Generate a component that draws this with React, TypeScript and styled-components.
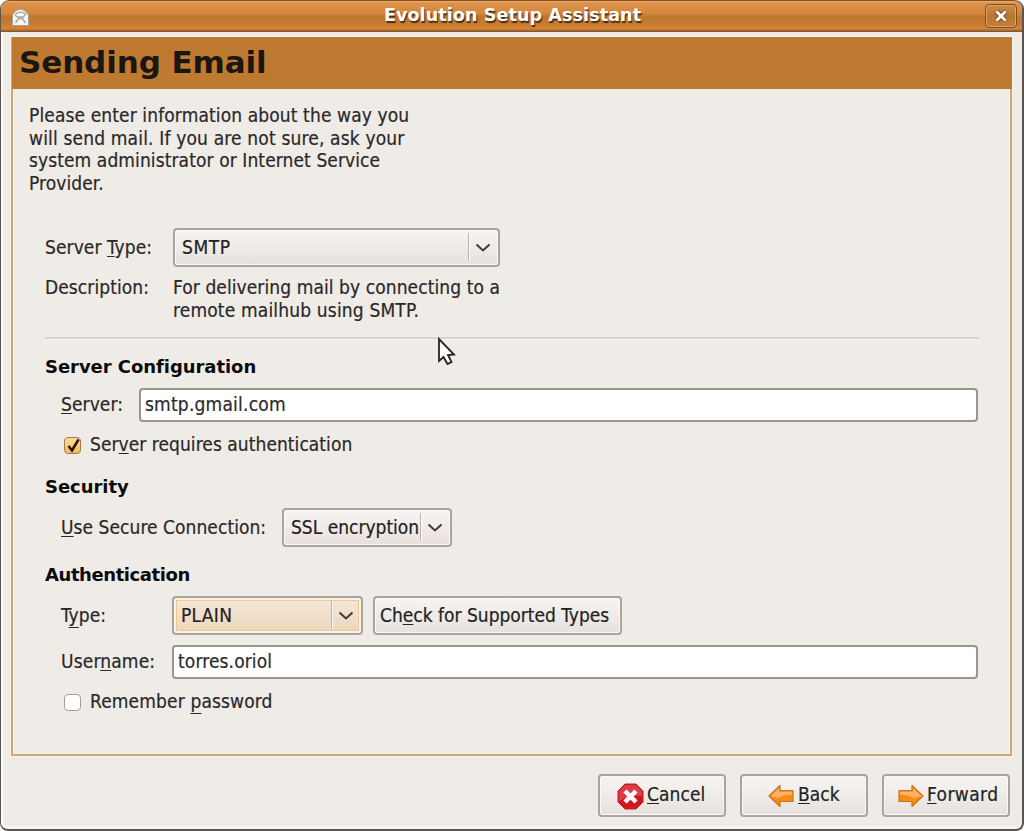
import React from "react";
import styled, { createGlobalStyle } from "styled-components";

const GlobalStyle = createGlobalStyle`
  * { box-sizing: border-box; }
  body {
    margin: 0;
    background: #fff;
    font-family: "DejaVu Sans Condensed", "DejaVu Sans", sans-serif;
    font-stretch: condensed;
    font-size: 19px;
    line-height: 22.6px;
    color: #2a2827;
  }
`;

const Window = styled.main`
  width: 1024px;
  height: 831px;
  display: flex;
  flex-direction: column;
  overflow: hidden;
  background: #efebe7;
  border: 1px solid #5a5550;
  border-width: 0 2px 2px 1px;
  border-radius: 9px 9px 8px 8px;
  box-shadow: inset 2px 0 0 #fbf9f6, inset 0 -3px 0 #f8f5f1;
`;

const TitleBar = styled.header`
  flex: none;
  height: 32px;
  display: grid;
  grid-template-columns: 38px 1fr 38px;
  align-items: center;
  border-top: 1px solid #8a4f18;
  border-bottom: 1px solid #7f5a35;
  border-radius: 8px 8px 0 0;
  background: linear-gradient(#eab27a 0, #dc914a 2px, #d5883f 12px, #bd772e 16px, #c57b30 22px, #d68433 28px, #a9692c 29px, #a9692c 30px);
`;

const WindowIcon = styled.svg`
  margin: 2px 0 0 10px;
`;

const Title = styled.h1`
  margin: 0;
  padding: 0 0 2px 2px;
  font-family: "DejaVu Sans", sans-serif;
  font-size: 17.5px;
  letter-spacing: 0.11px;
  font-weight: bold;
  font-stretch: normal;
  text-align: center;
  color: #fff;
  text-shadow: 1px 2px 1px #4a2c0e;
  white-space: nowrap;
`;

const CloseButton = styled.button`
  width: 32px;
  height: 24px;
  margin: 0 0 1px 1px;
  padding: 0;
  display: grid;
  place-items: center;
  border: 1.5px solid #7d4e20;
  border-radius: 4px;
  background: linear-gradient(#d08a49, #b97630 50%, #c98039);
  box-shadow: inset 0 0 0 1px #dda36a;
`;

const Panel = styled.section`
  margin: 5px 10px 0 10px;
  height: 719px;
  flex: none;
  display: flex;
  flex-direction: column;
  border: 2px solid #cfa679;
  box-shadow: 0 0 0 1px #f8f3ec, inset 0 0 0 1px #f8f3ec;
`;

const PanelHeader = styled.h2`
  margin: -2px -2px 0 -1px;
  height: 52px;
  flex: none;
  padding: 1px 0 0 7px;
  background: #be7a31;
  color: #1b1610;
  font-family: "DejaVu Sans", sans-serif;
  font-stretch: normal;
  font-weight: bold;
  font-size: 31px;
  letter-spacing: -0.1px;
  line-height: 49px;
  white-space: nowrap;
`;

const Content = styled.div`
  display: flex;
  flex-direction: column;
  padding: 15px 32px 0;
`;

const Intro = styled.p`
  margin: 0 0 0 -16px;
  height: 92px;
`;

const Line = styled.span<{ $track?: number }>`
  display: block;
  width: max-content;
  white-space: pre;
  letter-spacing: ${(p) => p.$track ?? 0.08}px;
  -webkit-text-stroke: 0.2px currentColor;
`;

const Key = styled.span<{ $low?: boolean }>`
  text-decoration: underline;
  text-decoration-thickness: 1px;
  text-decoration-skip-ink: none;
  text-underline-offset: ${(p) => (p.$low ? 5 : 2)}px;
`;

const Row = styled.div<{ $top: number; $height: number; $indent?: number }>`
  display: flex;
  align-items: center;
  flex: none;
  margin-top: ${(p) => p.$top}px;
  height: ${(p) => p.$height}px;
  padding-left: ${(p) => p.$indent ?? 0}px;
`;

const Label = styled.label<{ $width: number; $raised?: boolean }>`
  flex: none;
  width: ${(p) => p.$width}px;
  padding-bottom: ${(p) => (p.$raised ? 2 : 0)}px;
`;

const SectionTitle = styled.h3<{ $top: number; $track?: number }>`
  margin: ${(p) => p.$top}px 0 0;
  height: 23px;
  flex: none;
  font-family: "DejaVu Sans", sans-serif;
  font-stretch: normal;
  font-size: 18px;
  line-height: 23px;
  font-weight: bold;
  letter-spacing: ${(p) => p.$track ?? -0.05}px;
  color: #0c0b0b;
`;

const Separator = styled.hr`
  width: 934px;
  height: 3px;
  margin: 15px 0 0;
  border: 0;
  border-top: 2px solid #d9d0c8;
  border-bottom: 1px solid #f9f6f3;
`;

const Button = styled.button<{ $width: number; $focus?: boolean }>`
  flex: none;
  width: ${(p) => p.$width}px;
  height: 39px;
  display: flex;
  align-items: center;
  padding: 0 0 1px 7px;
  font: inherit;
  color: #222;
  text-align: left;
  border: 2px solid #aaa49e;
  border-radius: 4px;
  background: ${(p) => (p.$focus ? "linear-gradient(#f5e7d8, #f1dfca 50%, #ecd6ba)" : "linear-gradient(#f6f4f2, #efebe8 50%, #e8e1de)")};
  box-shadow: ${(p) => (p.$focus ? "inset 0 0 0 2px #faf4e8, inset 0 0 0 3px #ecc892" : "inset 0 0 0 1px #fbfaf8")};
`;

const CheckTypesButton = styled(Button)`
  margin-left: 10px;
  padding-left: 5px;
`;

const ActionButton = styled(Button)<{ $inset: number; $gap: number }>`
  height: 43px;
  padding: 0 0 3px ${(p) => p.$inset}px;
  gap: ${(p) => p.$gap}px;

  svg {
    flex: none;
    position: relative;
    top: 2px;
  }
`;

const Divider = styled.i`
  flex: none;
  width: 2px;
  height: 28px;
  margin-left: auto;
  border-left: 1px solid #bbb4ae;
  border-right: 1px solid #faf8f5;
`;

const ArrowSlot = styled.svg`
  flex: none;
  margin: 1px 7px 0 5px;
`;

const Field = styled.input<{ $width: number; $track?: number }>`
  flex: none;
  width: ${(p) => p.$width}px;
  height: 34px;
  padding: 0 4px 3px;
  font: inherit;
  letter-spacing: ${(p) => p.$track ?? 0}px;
  -webkit-text-stroke: 0.2px currentColor;
  color: #2c2a29;
  border: 2px solid #9b958f;
  border-radius: 4px;
  background: #fff;
`;

const CheckBox = styled.span<{ $on?: boolean }>`
  width: 17px;
  height: 17px;
  margin: 2px 9px 0 3px;
  display: grid;
  place-items: center;
  border: 1.5px solid ${(p) => (p.$on ? "#a5794a" : "#a49d97")};
  border-radius: 4px;
  background: ${(p) => (p.$on ? "linear-gradient(#ffdc98, #f6ba61)" : "#fff")};
`;

const Footer = styled.footer`
  display: flex;
  justify-content: flex-end;
  gap: 14px;
  padding: 18px 12px 0 0;
`;

const Pointer = styled.svg`
  position: absolute;
  left: 437px;
  top: 337px;
`;

const Arrow = () => (
  <ArrowSlot width="16" height="10" viewBox="0 0 16 10">
    <path d="M1.5 1.5 8 7.5l6.500-6" fill="none" stroke="#3d3a38" strokeWidth="2" />
  </ArrowSlot>
);

const Envelope = () => (
  <WindowIcon width="19" height="19" viewBox="0 0 19 19">
    <path d="M1.500 7 5 2.500Q9.500 0 13.500 2.500L17.500 7v10.500h-16z" fill="#f6f6f5" stroke="#a8a097" />
    <path d="M4.500 7.500q0-2.500 4-3 5-.5 6 2l-2.500 2.500H6.500z" fill="#fff" stroke="#aaa8a5" strokeWidth="1.300" />
    <path d="M4.500 15 7.500 10.500h4L14.500 15" fill="none" stroke="#a9a6a3" strokeWidth="1.500" />
  </WindowIcon>
);

const StopIcon = () => (
  <svg width="27" height="27" viewBox="0 0 27 27">
    <path d="M8 1h11l7 7v11l-7 7H8l-7-7V8z" fill="#cf1720" stroke="#c4202a" />
    <path d="M8 2h11l6 6v5Q12 12 2 18V8z" fill="#de5054" opacity=".7" />
    <path d="m8 8 11 11m0-11-11 11" stroke="#fff" strokeWidth="4.500" />
  </svg>
);

const DirectionIcon = ({ flip }: { flip?: boolean }) => (
  <svg width="26" height="24" viewBox="0 0 26 24">
    <g transform={flip ? "translate(26 0) scale(-1 1)" : undefined}>
      <path d="M1 12 12 1.500v5H25v11H12v5z" fill="#f78b16" stroke="#c9741f" strokeWidth="1.200" strokeLinejoin="round" />
      <path d="M2.500 12 11 4v3.700H24v3Q14 11 10 14z" fill="#fbb467" />
    </g>
  </svg>
);

export default function App() {
  return (
    <>
      <GlobalStyle />
      <Window>
        <TitleBar>
          <Envelope />
          <Title>Evolution Setup Assistant</Title>
          <CloseButton aria-label="Close">
            <svg width="14" height="14" viewBox="0 0 14 14">
              <path d="m2.500 2.500 9 9m0-9-9 9" stroke="#754619" strokeWidth="5" />
              <path d="m2.500 2.500 9 9m0-9-9 9" stroke="#fff" strokeWidth="3" />
            </svg>
          </CloseButton>
        </TitleBar>
        <Panel>
          <PanelHeader>Sending Email</PanelHeader>
          <Content>
            <Intro>
              <Line $track={0.11}>Please enter information about the way you</Line>
              <Line $track={0.16}>will send mail. If you are not sure, ask your</Line>
              <Line $track={0.09}>system administrator or Internet Service</Line>
              <Line>Provider.</Line>
            </Intro>
            <Row $top={32} $height={39}>
              <Label $width={128}><Line>Server <Key>T</Key>ype:</Line></Label>
              <Button $width={327}><Line $track={0.6}>SMTP</Line><Divider /><Arrow /></Button>
            </Row>
            <Row $top={9} $height={46}>
              <Label $width={128}><Line>Description:{"\n"} </Line></Label>
              <div>
                <Line>For delivering mail by connecting to a</Line>
                <Line $track={0.16}>remote mailhub using SMTP.</Line>
              </div>
            </Row>
            <Separator />
            <SectionTitle $top={15}>Server Configuration</SectionTitle>
            <Row $top={10} $height={34} $indent={16}>
              <Label $width={78} $raised><Line><Key>S</Key>erver:</Line></Label>
              <Field $width={839} $track={0.2} defaultValue="smtp.gmail.com" />
            </Row>
            <Row $top={11} $height={23} $indent={16}>
              <CheckBox $on>
                <svg width="14" height="16" viewBox="0 0 14 16">
                  <path d="m2.500 8 3.500 4.500L12.500 1.500" fill="none" stroke="#211a12" strokeWidth="2.500" />
                </svg>
              </CheckBox>
              <Line $track={0.05}>Ser<Key>v</Key>er requires authentication</Line>
            </Row>
            <SectionTitle $top={19}>Security</SectionTitle>
            <Row $top={10} $height={39} $indent={16}>
              <Label $width={221}><Line $track={0.05}><Key>U</Key>se Secure Connection:</Line></Label>
              <Button $width={170}><Line $track={0}>SSL encryption</Line><Divider /><Arrow /></Button>
            </Row>
            <SectionTitle $top={16} $track={-0.42}>Authentication</SectionTitle>
            <Row $top={10} $height={39} $indent={16}>
              <Label $width={111}><Line>T<Key $low>y</Key>pe:</Line></Label>
              <Button $width={191} $focus><Line $track={0.3}>PLAIN</Line><Divider /><Arrow /></Button>
              <CheckTypesButton $width={249}><Line $track={0}>Ch<Key>e</Key>ck for Supported Types</Line></CheckTypesButton>
            </Row>
            <Row $top={10} $height={34} $indent={16}>
              <Label $width={111} $raised><Line $track={0.15}>User<Key>n</Key>ame:</Line></Label>
              <Field $width={806} $track={0.12} defaultValue="torres.oriol" />
            </Row>
            <Row $top={11} $height={23} $indent={16}>
              <CheckBox />
              <Line $track={0.13}>Remember <Key $low>p</Key>assword</Line>
            </Row>
          </Content>
        </Panel>
        <Footer>
          <ActionButton $width={128} $inset={17} $gap={3}><StopIcon /><Line><Key>C</Key>ancel</Line></ActionButton>
          <ActionButton $width={128} $inset={26} $gap={4}><DirectionIcon /><Line><Key>B</Key>ack</Line></ActionButton>
          <ActionButton $width={128} $inset={14} $gap={3}><DirectionIcon flip /><Line $track={0.4}><Key>F</Key>orward</Line></ActionButton>
        </Footer>
        <Pointer width="20" height="30" viewBox="0 0 20 30">
          <path d="M2 2v22l4.500-4 4 7 4-2-3.500-7 6-.5z" fill="#fff" stroke="#252423" strokeWidth="1.800" />
        </Pointer>
      </Window>
    </>
  );
}
